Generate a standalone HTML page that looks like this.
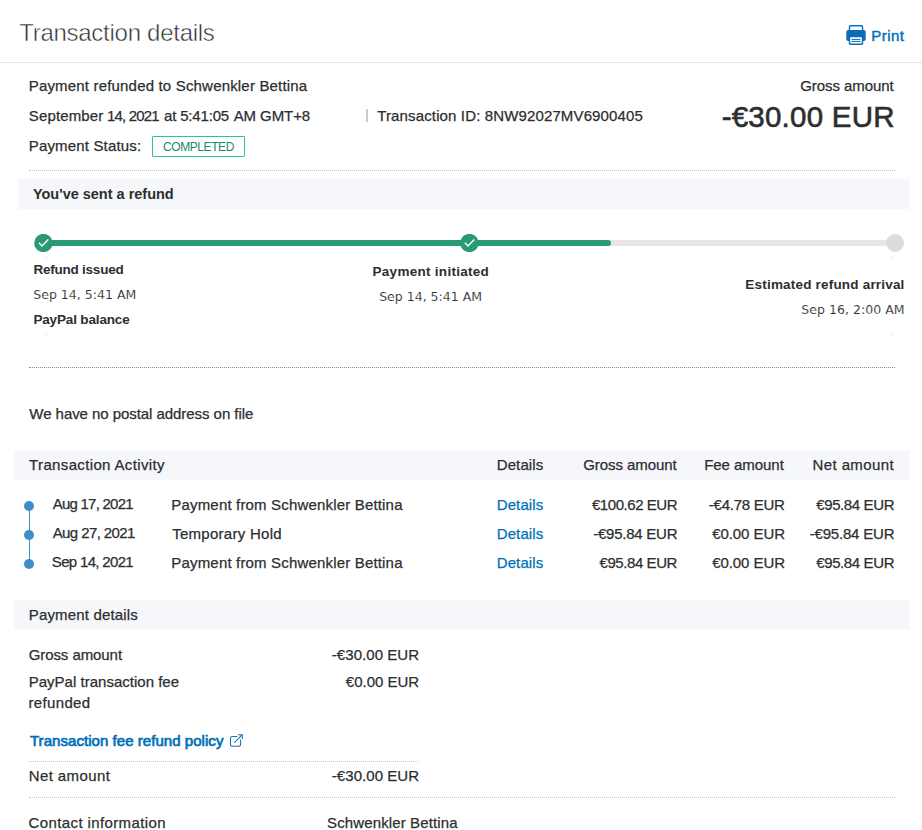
<!DOCTYPE html>
<html lang="en">
<head>
<meta charset="utf-8">
<title>Transaction details</title>
<style>
html,body{margin:0;padding:0;background:#fff;}
body{width:922px;height:830px;position:relative;overflow:hidden;font-family:"Liberation Sans",sans-serif;color:#2c2e2f;font-size:15px;}
.t{position:absolute;white-space:nowrap;line-height:20px;height:20px;-webkit-text-stroke:0.25px currentColor;}
.b{font-weight:bold;-webkit-text-stroke:0;}
.ns{-webkit-text-stroke:0;}
.sb{-webkit-text-stroke:0.7px currentColor;}
.dot{position:absolute;height:1px;color:#c8c8c8;background:repeating-linear-gradient(90deg,currentColor 0,currentColor 1px,transparent 1px,transparent 2px);}
.dot.bl{box-shadow:-1px 0 0 currentColor;}
.band{position:absolute;background:#f5f7fa;}
.link{color:#0070ba;}
.dv{font-family:"DejaVu Sans","Liberation Sans",sans-serif;-webkit-text-stroke:0.12px #fff;}
.abs{position:absolute;}
</style>
</head>
<body>
<!-- header -->
<svg class="abs" style="left:846px;top:25px" width="20" height="20" viewBox="0 0 20 20">
  <rect x="3.5" y="0.8" width="13" height="6" rx="0.8" fill="#fff" stroke="#0b6cb7" stroke-width="1.4"/>
  <rect x="0.3" y="4.9" width="19.4" height="11.1" rx="2" fill="#0b6cb7"/>
  <rect x="3.5" y="11.6" width="13" height="7.6" rx="0.8" fill="#fff" stroke="#0b6cb7" stroke-width="1.4"/>
  <rect x="5.6" y="13.9" width="8.8" height="1" fill="#0b6cb7"/>
  <rect x="5.6" y="15.9" width="8.8" height="1" fill="#0b6cb7"/>
</svg>
<div class="dot" style="left:0;top:62px;width:922px;color:#cbcbcb;"></div>

<!-- summary -->
<div class="abs" style="left:366px;top:109px;width:2px;height:13.4px;background:#cbc9ce;"></div>
<div class="abs" style="left:152px;top:136px;width:91px;height:19px;border:1px solid #2bc492;border-radius:1px;"></div>
<div class="dot bl" style="left:30px;top:170px;width:865px;color:#c6c6c6;"></div>

<!-- refund tracker -->
<div class="band" style="left:18px;top:179px;width:891px;height:30px;"></div>
<div class="abs" style="left:43px;top:240px;width:852px;height:6px;background:#e6e6e6;border-radius:3px;"></div>
<div class="abs" style="left:43px;top:240px;width:568px;height:6px;background:#299976;border-radius:3px;"></div>
<svg class="abs" style="left:34px;top:234px" width="19" height="18" viewBox="0 0 19 18"><circle cx="9.4" cy="9" r="9.2" fill="#299976"/><path d="M4.9 8.7 L8 11.9 L14.3 5.6" fill="none" stroke="#fff" stroke-width="1.4" stroke-linejoin="miter"/></svg>
<svg class="abs" style="left:459.5px;top:234px" width="19" height="18" viewBox="0 0 19 18"><circle cx="9.4" cy="9" r="9.2" fill="#299976"/><path d="M4.9 8.7 L8 11.9 L14.3 5.6" fill="none" stroke="#fff" stroke-width="1.4" stroke-linejoin="miter"/></svg>
<div class="abs" style="left:886px;top:234px;width:18px;height:18px;border-radius:50%;background:#dcdcdc;"></div>
<div class="abs" style="left:44px;top:256px;width:850px;height:80px;background:#f8f8f8;"><div style="width:100%;height:100%;background:#fff;border-radius:8px;"></div></div>
<div class="dot bl" style="left:30px;top:367px;width:865px;color:#8a8a8a;"></div>

<!-- activity -->
<div class="band" style="left:14px;top:450px;width:896px;height:30px;"></div>
<div class="abs" style="left:28.6px;top:506px;width:1.2px;height:58px;background:#3d8ec9;"></div>
<div class="abs" style="left:24px;top:501px;width:10px;height:10px;border-radius:50%;background:#3d8ec9;"></div>
<div class="abs" style="left:24px;top:530px;width:10px;height:10px;border-radius:50%;background:#3d8ec9;"></div>
<div class="abs" style="left:24px;top:559px;width:10px;height:10px;border-radius:50%;background:#3d8ec9;"></div>

<!-- payment details -->
<div class="band" style="left:14px;top:600px;width:896px;height:30px;"></div>
<svg class="abs" style="left:229px;top:733px" width="15" height="15" viewBox="0 0 15 15" fill="none" stroke="#1472ba" stroke-width="1.05" stroke-linejoin="round"><path d="M8.2 3.4 H3.5 a2 2 0 0 0 -2 2 V11.3 a2 2 0 0 0 2 2 H9.6 a2 2 0 0 0 2 -2 V6.6"/><path d="M5.4 9.6 L13.3 1.7 M8.9 1.7 H13.3 V6.1"/></svg>
<div class="dot" style="left:29px;top:761px;width:389px;"></div>
<div class="dot bl" style="left:30px;top:797px;width:865px;"></div>

<!-- text -->
<div class="t" id="h1" style="left:19.20px;top:23.00px;font-size:24px;letter-spacing:-0.270px;color:#2c2e2f;-webkit-text-stroke:0.5px #fff;">Transaction details</div>
<div class="t link" id="print" style="left:871.17px;top:26.01px;font-size:15px;letter-spacing:0.491px;-webkit-text-stroke:0.45px currentColor;">Print</div>
<div class="t" id="s1" style="left:28.74px;top:76.00px;font-size:15px;letter-spacing:0.179px;">Payment refunded to Schwenkler Bettina</div>
<div id="s2g">
<span class="t" id="s2" style="left:28.84px;top:106.00px;font-size:15px;letter-spacing:0.126px;">September</span> 
<span class="t" id="s2b" style="left:107.08px;top:106.00px;font-size:15px;letter-spacing:-0.843px;">14, 2021</span> 
<span class="t" id="s2c" style="left:164.09px;top:106.00px;font-size:15px;letter-spacing:-0.182px;">at 5:41:05</span> 
<span class="t" id="s2d" style="left:233.63px;top:106.00px;font-size:15px;letter-spacing:-0.081px;">AM GMT+8</span> 
</div>
<div class="t" id="s3" style="left:377.25px;top:106.00px;font-size:15px;letter-spacing:0.136px;">Transaction ID: 8NW92027MV6900405</div>
<div class="t" id="s4" style="left:28.74px;top:136.00px;font-size:15px;letter-spacing:0.169px;">Payment Status:</div>
<div class="t ns" id="s5" style="left:162.99px;top:137.00px;font-size:12px;letter-spacing:-0.418px;color:#1a8a6c;">COMPLETED</div>
<div class="t" id="g1" style="left:800.16px;top:76.00px;font-size:15px;letter-spacing:-0.062px;">Gross amount</div>
<div class="t" id="g2" style="left:721.65px;top:107.00px;font-size:29.5px;letter-spacing:0.229px;-webkit-text-stroke:0.6px currentColor;">-€30.00 EUR</div>
<div class="t b" id="r0" style="left:32.93px;top:184.01px;font-size:14.5px;letter-spacing:-0.010px;">You've sent a refund</div>
<div class="t b" id="r1" style="left:33.41px;top:260.00px;font-size:13.5px;letter-spacing:-0.227px;">Refund issued</div>
<div class="t dv" id="r2" style="left:33.26px;top:285.00px;font-size:12.5px;letter-spacing:0.019px;">Sep 14, 5:41 AM</div>
<div class="t b" id="r3" style="left:33.41px;top:310.00px;font-size:13.5px;letter-spacing:-0.156px;">PayPal balance</div>
<div class="t b" id="r4" style="left:372.54px;top:262.00px;font-size:13.5px;letter-spacing:0.285px;">Payment initiated</div>
<div class="t dv" id="r5" style="left:379.15px;top:287.00px;font-size:12.5px;letter-spacing:0.009px;">Sep 14, 5:41 AM</div>
<div class="t b" id="r6" style="left:745.37px;top:275.00px;font-size:13.5px;letter-spacing:0.194px;">Estimated refund arrival</div>
<div class="t dv" id="r7" style="left:801.35px;top:300.00px;font-size:12.5px;letter-spacing:0.038px;">Sep 16, 2:00 AM</div>
<div class="t" id="a0" style="left:29.37px;top:404.00px;font-size:15px;letter-spacing:-0.055px;">We have no postal address on file</div>
<div class="t" id="th0" style="left:29.11px;top:455.00px;font-size:15px;letter-spacing:0.353px;">Transaction Activity</div>
<div class="t" id="th1" style="left:496.74px;top:455.00px;font-size:15px;letter-spacing:0.102px;">Details</div>
<div class="t" id="th2" style="left:583.16px;top:455.00px;font-size:15px;letter-spacing:-0.062px;">Gross amount</div>
<div class="t" id="th3" style="left:704.17px;top:455.00px;font-size:15px;letter-spacing:-0.042px;">Fee amount</div>
<div class="t" id="th4" style="left:812.57px;top:455.00px;font-size:15px;letter-spacing:0.391px;">Net amount</div>
<div class="t" id="d1" style="left:52.65px;top:494.00px;font-size:15px;letter-spacing:-0.749px;">Aug 17, 2021</div>
<div class="t" id="d2" style="left:52.65px;top:523.00px;font-size:15px;letter-spacing:-0.586px;">Aug 27, 2021</div>
<div class="t" id="d3" style="left:51.82px;top:552.00px;font-size:15px;letter-spacing:-0.673px;">Sep 14, 2021</div>
<div class="t" id="e1" style="left:171.33px;top:495.00px;font-size:15px;letter-spacing:0.174px;">Payment from Schwenkler Bettina</div>
<div class="t" id="e2" style="left:172.16px;top:524.00px;font-size:15px;letter-spacing:0.275px;">Temporary Hold</div>
<div class="t" id="e3" style="left:171.33px;top:553.00px;font-size:15px;letter-spacing:0.174px;">Payment from Schwenkler Bettina</div>
<div class="t link" id="l1" style="left:496.74px;top:495.00px;font-size:15px;letter-spacing:0.102px;">Details</div>
<div class="t link" id="l2" style="left:496.74px;top:524.00px;font-size:15px;letter-spacing:0.102px;">Details</div>
<div class="t link" id="l3" style="left:496.74px;top:553.00px;font-size:15px;letter-spacing:0.102px;">Details</div>
<div class="t" id="x1" style="left:591.96px;top:495.00px;font-size:15px;letter-spacing:-0.451px;">€100.62 EUR</div>
<div class="t" id="x2" style="left:593.26px;top:524.00px;font-size:15px;letter-spacing:-0.247px;">-€95.84 EUR</div>
<div class="t" id="x3" style="left:599.51px;top:553.00px;font-size:15px;letter-spacing:-0.419px;">€95.84 EUR</div>
<div class="t" id="y1" style="left:708.81px;top:495.00px;font-size:15px;letter-spacing:-0.246px;">-€4.78 EUR</div>
<div class="t" id="y2" style="left:712.22px;top:524.00px;font-size:15px;letter-spacing:-0.078px;">€0.00 EUR</div>
<div class="t" id="y3" style="left:712.22px;top:553.00px;font-size:15px;letter-spacing:-0.078px;">€0.00 EUR</div>
<div class="t" id="z1" style="left:816.22px;top:495.00px;font-size:15px;letter-spacing:-0.385px;">€95.84 EUR</div>
<div class="t" id="z2" style="left:809.81px;top:524.00px;font-size:15px;letter-spacing:-0.205px;">-€95.84 EUR</div>
<div class="t" id="z3" style="left:816.22px;top:553.00px;font-size:15px;letter-spacing:-0.385px;">€95.84 EUR</div>
<div class="t" id="p0" style="left:28.71px;top:605.00px;font-size:15px;letter-spacing:0.169px;">Payment details</div>
<div class="t" id="p1" style="left:28.63px;top:645.00px;font-size:15px;letter-spacing:-0.070px;">Gross amount</div>
<div class="t" id="p2" style="left:331.81px;top:645.00px;font-size:15px;letter-spacing:0.058px;">-€30.00 EUR</div>
<div class="t" id="p3" style="left:28.71px;top:672.00px;font-size:15px;letter-spacing:0.012px;">PayPal transaction fee</div>
<div class="t" id="p4" style="left:28.46px;top:693.01px;font-size:15px;letter-spacing:0.352px;">refunded</div>
<div class="t" id="p5" style="left:345.85px;top:672.00px;font-size:15px;letter-spacing:-0.021px;">€0.00 EUR</div>
<div class="t sb link" id="p6" style="left:29.97px;top:731.00px;font-size:15px;letter-spacing:0.050px;">Transaction fee refund policy</div>
<div class="t" id="p7" style="left:28.71px;top:766.00px;font-size:15px;letter-spacing:0.395px;">Net amount</div>
<div class="t" id="p8" style="left:331.81px;top:766.00px;font-size:15px;letter-spacing:0.058px;">-€30.00 EUR</div>
<div class="t" id="p9" style="left:28.52px;top:813.00px;font-size:15px;letter-spacing:0.389px;">Contact information</div>
<div class="t" id="p10" style="left:327.05px;top:813.00px;font-size:15px;letter-spacing:0.123px;">Schwenkler Bettina</div>
</body>
</html>
